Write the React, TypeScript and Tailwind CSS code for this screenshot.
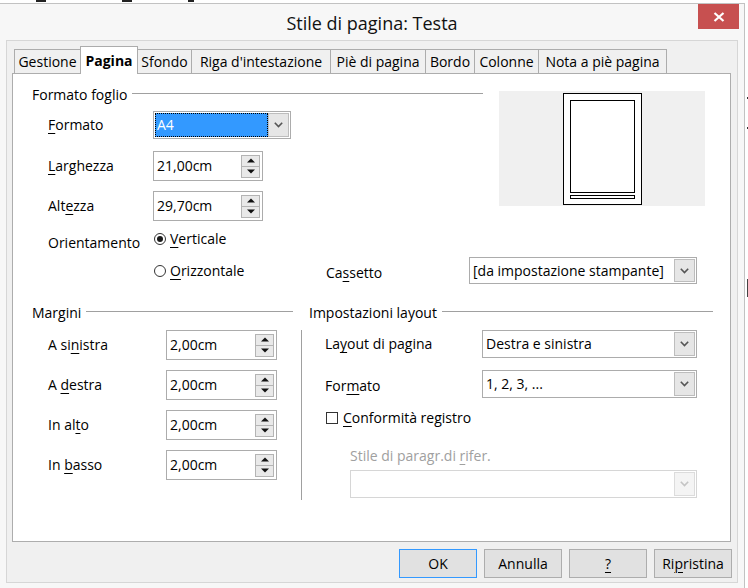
import React from "react";

const U = ({ children }: { children: React.ReactNode }) => (
  <span className="underline underline-offset-[3px] decoration-1">{children}</span>
);

function Chevron({ color = "#555555" }: { color?: string }) {
  return (
    <svg width="9" height="6" viewBox="0 0 9 6">
      <path d="M0.8 0.8 L4.5 4.6 L8.2 0.8" fill="none" stroke={color} strokeWidth="1.6" />
    </svg>
  );
}

function DropBtn({ disabled }: { disabled?: boolean }) {
  return (
    <div
      className={
        disabled
          ? "w-[21px] h-full border border-[#dcdcdc] bg-[#f4f4f4] flex items-center justify-center"
          : "w-[21px] h-full border border-[#bdbdbd] bg-[#e6e6e6] flex items-center justify-center"
      }
    >
      <Chevron color={disabled ? "#c4c4c4" : "#555555"} />
    </div>
  );
}

function SelectBox({
  className,
  value,
  focused,
  disabled,
}: {
  className: string;
  value?: string;
  focused?: boolean;
  disabled?: boolean;
}) {
  return (
    <div
      className={
        (disabled ? "border-[#d6d6d6] " : "border-[#acacac] ") +
        "flex border bg-white p-px box-border " +
        className
      }
    >
      {focused ? (
        <div className="flex-1 bg-[#3399ff] border border-dotted border-black flex items-center pl-[1px] text-white">
          {value}
        </div>
      ) : (
        <div className="flex-1 flex items-center pl-[2px]">{value}</div>
      )}
      <DropBtn disabled={disabled} />
    </div>
  );
}

function Tri({ up }: { up?: boolean }) {
  return (
    <svg width="8" height="5" viewBox="0 0 8 5">
      <polygon points={up ? "0,4.5 4,0.5 8,4.5" : "0,0.5 4,4.5 8,0.5"} fill="#111" />
    </svg>
  );
}

function Spin({ className, value }: { className: string; value: string }) {
  return (
    <div className={"flex items-center border border-[#acacac] bg-white box-border h-[30px] " + className}>
      <div className="flex-1 pl-[3px]">{value}</div>
      <div className="flex flex-col w-[19px] mr-[2px]">
        <div className="h-[12px] border border-[#b4b4b4] bg-[#e9e9e9] flex items-center justify-center">
          <Tri up />
        </div>
        <div className="h-[12px] -mt-px border border-[#b4b4b4] bg-[#e9e9e9] flex items-center justify-center">
          <Tri />
        </div>
      </div>
    </div>
  );
}

function Radio({ checked }: { checked?: boolean }) {
  return (
    <span className="w-[12px] h-[12px] rounded-full border border-[#333333] bg-white flex items-center justify-center shrink-0">
      {checked && <span className="w-[6px] h-[6px] rounded-full bg-[#1a1a1a]" />}
    </span>
  );
}

const tabs: { label: string; cls: string; active?: boolean }[] = [
  { label: "Gestione", cls: "w-[67px]" },
  { label: "Pagina", cls: "w-[58px]", active: true },
  { label: "Sfondo", cls: "w-[55px]" },
  { label: "Riga d'intestazione", cls: "w-[140px]" },
  { label: "Piè di pagina", cls: "w-[96px]" },
  { label: "Bordo", cls: "w-[50px]" },
  { label: "Colonne", cls: "w-[65px]" },
  { label: "Nota a piè pagina", cls: "w-[129px]" },
];

function Btn({ children, primary }: { children: React.ReactNode; primary?: boolean }) {
  return (
    <div
      className={
        (primary ? "border-[#3399ff] " : "border-[#adadad] ") +
        "w-[78px] h-[29px] border bg-[#e1e1e1] flex items-center justify-center box-border"
      }
    >
      {children}
    </div>
  );
}

export default function App() {
  return (
    <div className="w-[748px] h-[588px] bg-white overflow-hidden flex flex-col font-['Open_Sans',sans-serif] text-[14px] leading-[20px] text-black">
      {/* background strip top */}
      <div className="h-[3px] flex shrink-0">
        <div className="w-[36px]" />
        <div className="w-[10px] h-[2px] bg-[#222]" />
        <div className="w-[76px]" />
        <div className="w-[10px] h-[2px] bg-[#222]" />
        <div className="w-[56px]" />
        <div className="w-[6px] h-[2px] bg-[#222]" />
      </div>
      <div className="flex flex-1 min-h-0">
        {/* window */}
        <div className="w-[745px] flex flex-col bg-[#f7f7f7] border-t border-r border-[#c2c2c2] box-border">
          {/* title bar */}
          <div className="h-[36px] grid grid-cols-[1fr_auto_1fr] shrink-0">
            <div />
            <div className="self-center text-[18px] leading-[24px] text-[#111] pt-[1px]">Stile di pagina: Testa</div>
            <div className="flex justify-end items-start pr-[5px]">
              <div className="w-[41px] h-[25px] bg-[#c75050] flex items-center justify-center">
                <svg width="12" height="10" viewBox="0 0 12 10">
                  <path d="M1.5 1 L10.5 9 M10.5 1 L1.5 9" stroke="white" strokeWidth="2.2" />
                </svg>
              </div>
            </div>
          </div>
          {/* body */}
          <div className="ml-[6px] mr-[6px] w-[732px] h-[543px] border border-[#d6d6d6] bg-[#f0f0f0] box-border flex flex-col pt-[5px] pl-[5px]">
            {/* tabs */}
            <div className="flex h-[27px] pl-[2px] relative z-10">
              {tabs.map((t, i) =>
                t.active ? (
                  <div
                    key={t.label}
                    className={
                      t.cls +
                      " h-[28px] -ml-px bg-white border-l border-t border-r border-[#acacac] flex items-center justify-center font-bold relative z-10"
                    }
                  >
                    {t.label}
                  </div>
                ) : (
                  <div
                    key={t.label}
                    className={
                      t.cls +
                      (i > 0 ? " -ml-px" : "") +
                      " mt-[3px] h-[24px] bg-[#f0f0f0] border-l border-t border-r border-[#acacac] flex items-center justify-center"
                    }
                  >
                    {t.label}
                  </div>
                )
              )}
            </div>
            {/* tab page */}
            <div className="w-[719px] h-[469px] border border-[#adadad] bg-white box-border flex flex-col">
              {/* top section */}
              <div className="flex items-start">
                <div className="w-[470px] flex flex-col">
                  <div className="mt-[11px] h-[20px] flex items-center pl-[19px]">
                    <span>Formato foglio</span>
                    <div className="flex-1 h-px bg-[#a0a0a0] ml-[5px] mb-[3px]" />
                  </div>
                  <div className="mt-[6px] h-[28px] flex items-center pl-[35px]">
                    <div className="w-[105px]">
                      <U>F</U>ormato
                    </div>
                    <SelectBox className="w-[138px] h-[28px]" value="A4" focused />
                  </div>
                  <div className="mt-[12px] h-[30px] flex items-center pl-[35px]">
                    <div className="w-[105px]">
                      <U>L</U>arghezza
                    </div>
                    <Spin className="w-[110px]" value="21,00cm" />
                  </div>
                  <div className="mt-[10px] h-[30px] flex items-center pl-[35px]">
                    <div className="w-[105px]">
                      Alt<U>e</U>zza
                    </div>
                    <Spin className="w-[110px]" value="29,70cm" />
                  </div>
                  <div className="mt-[8px] h-[20px] flex items-start pl-[35px]">
                    <div className="w-[106px] mt-[4px]">Orientamento</div>
                    <div className="flex items-center gap-[4px] h-[20px]">
                      <Radio checked />
                      <span>
                        <U>V</U>erticale
                      </span>
                    </div>
                  </div>
                </div>
                <div className="ml-[16px] mt-[17px] w-[206px] h-[115px] bg-[#f0f0f0]">
                  <svg width="206" height="115" viewBox="0 0 206 115">
                    <rect x="64.5" y="2.5" width="78" height="111" fill="white" stroke="black" strokeWidth="1" />
                    <rect x="71.5" y="9.5" width="64" height="92" fill="white" stroke="black" strokeWidth="1" />
                    <rect x="71.5" y="104.5" width="64" height="3" fill="white" stroke="black" strokeWidth="1" />
                  </svg>
                </div>
              </div>
              <div className="mt-[8px] h-[27px] flex items-center pl-[35px]">
                <div className="w-[106px]" />
                <div className="w-[172px] flex items-center gap-[4px]">
                  <Radio />
                  <span>
                    <U>O</U>rizzontale
                  </span>
                </div>
                <div className="w-[143px] pt-[4px]">
                  Ca<U>s</U>setto
                </div>
                <SelectBox className="w-[228px] h-[27px]" value="[da impostazione stampante]" />
              </div>
              {/* lower section */}
              <div className="mt-[19px] flex items-start">
                <div className="w-[280px] flex flex-col">
                  <div className="h-[20px] flex items-center pl-[19px]">
                    <span>Margini</span>
                    <div className="flex-1 h-px bg-[#a0a0a0] ml-[5px] mb-[3px]" />
                  </div>
                  {[
                    [<>A si<U>n</U>istra</>, "mt-[7px]"],
                    [<>A <U>d</U>estra</>, "mt-[10px]"],
                    [<>In al<U>t</U>o</>, "mt-[10px]"],
                    [<>In <U>b</U>asso</>, "mt-[10px]"],
                  ].map(([label, mt], i) => (
                    <div key={i} className={mt + " h-[30px] flex items-center pl-[35px]"}>
                      <div className="w-[118px]">{label}</div>
                      <Spin className="w-[111px]" value="2,00cm" />
                    </div>
                  ))}
                </div>
                <div className="flex-1 flex flex-col">
                  <div className="h-[20px] flex items-center pl-[16px] pr-[17px]">
                    <span>Impostazioni layout</span>
                    <div className="flex-1 h-px bg-[#a0a0a0] ml-[5px] mb-[3px]" />
                  </div>
                  <div className="ml-[8px] mt-[7px] border-l border-[#a0a0a0] h-[170px] flex flex-col pl-[23px]">
                    <div className="h-[28px] flex items-center">
                      <div className="w-[157px]">
                        La<U>y</U>out di pagina
                      </div>
                      <SelectBox className="w-[215px] h-[28px]" value="Destra e sinistra" />
                    </div>
                    <div className="mt-[12px] h-[28px] flex items-center">
                      <div className="w-[157px] pt-[3px]">
                        For<U>m</U>ato
                      </div>
                      <SelectBox className="w-[215px] h-[28px]" value="1, 2, 3, ..." />
                    </div>
                    <div className="mt-[10px] h-[20px] flex items-center gap-[5px] pl-px">
                      <span className="w-[12px] h-[12px] border border-[#333333] bg-white shrink-0" />
                      <span>
                        <U>C</U>onformità registro
                      </span>
                    </div>
                    <div className="mt-[18px] h-[20px] flex items-center pl-[25px] text-[#a0a0a0]">
                      <span>
                        Stile di paragr.di <U>r</U>ifer.
                      </span>
                    </div>
                    <div className="mt-[4px] pl-[25px]">
                      <SelectBox className="w-[347px] h-[28px]" disabled />
                    </div>
                  </div>
                </div>
              </div>
            </div>
            {/* buttons */}
            <div className="mt-[7px] flex justify-end gap-[7px] pr-[5px]">
              <Btn primary>OK</Btn>
              <Btn>Annulla</Btn>
              <Btn>
                <U>?</U>
              </Btn>
              <Btn>
                Ri<U>p</U>ristina
              </Btn>
            </div>
          </div>
        </div>
        {/* background strip right */}
        <div className="w-[3px] flex flex-col">
          <div className="h-[94px]" />
          <div className="h-[2px] ml-[2px] bg-[#333]" />
          <div className="h-[28px]" />
          <div className="h-[2px] ml-[2px] bg-[#333]" />
          <div className="h-[150px]" />
          <div className="h-[18px] ml-[2px] bg-[#444]" />
        </div>
      </div>
    </div>
  );
}
